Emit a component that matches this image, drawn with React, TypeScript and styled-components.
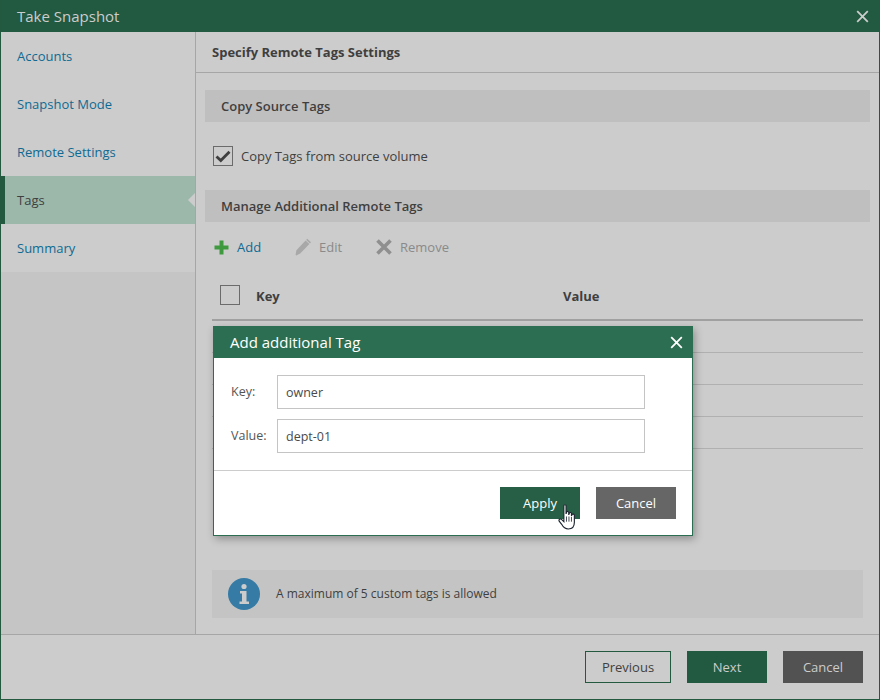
import React from "react";
import styled, { createGlobalStyle } from "styled-components";

const Global = createGlobalStyle`
  html, body { margin: 0; padding: 0; }
  body { font-family: "Open Sans", "Liberation Sans", sans-serif; background: #ccc; }
  * { box-sizing: border-box; }
`;

const Window = styled.div`
  position: relative;
  width: 880px;
  height: 700px;
  display: flex;
  flex-direction: column;
  background: #ccc;
  border: 1px solid #22593f;
  border-top: none;
  overflow: hidden;
`;
const TitleBar = styled.header`
  height: 32px;
  flex: none;
  margin: 0 -1px;
  padding: 0 11px 0 17px;
  display: flex;
  align-items: center;
  justify-content: space-between;
  background: #225a41;
  color: #ccc;
  font-size: 15px;
`;
const Main = styled.div`
  flex: 1;
  display: flex;
  min-height: 0;
`;
const Sidebar = styled.nav`
  width: 195px;
  flex: none;
  background: #c5c5c5;
  border-right: 1px solid #a6a6a6;
`;
const NavItem = styled.div<{ $active?: boolean }>`
  position: relative;
  height: 48px;
  display: flex;
  align-items: center;
  padding-left: ${(p) => (p.$active ? "12px" : "16px")};
  font-size: 13px;
  margin-left: ${(p) => (p.$active ? "-1px" : "0")};
  color: ${(p) => (p.$active ? "#3f3f3f" : "#0f6a92")};
  background: ${(p) => (p.$active ? "#9cb8ab" : "#ccc")};
  border-left: ${(p) => (p.$active ? "5px solid #22593f" : "none")};
  ${(p) =>
    p.$active &&
    `&::after {
      content: "";
      position: absolute;
      right: 0;
      top: 17px;
      border: 7px solid transparent;
      border-right-color: #ccc;
      border-left: none;
    }`}
`;
const Content = styled.section`
  flex: 1;
  display: flex;
  flex-direction: column;
  min-width: 0;
`;
const PaneTitle = styled.div`
  height: 41px;
  flex: none;
  padding-left: 16px;
  display: flex;
  align-items: center;
  font-size: 13px;
  font-weight: 700;
  color: #3f3f3f;
  border-bottom: 1px solid #a6a6a6;
`;
const PaneBody = styled.div`
  flex: 1;
  display: flex;
  flex-direction: column;
  padding: 17px 9px 16px 9px;
`;
const SectionBar = styled.div`
  height: 32px;
  flex: none;
  padding-left: 16px;
  display: flex;
  align-items: center;
  background: #bfbfbf;
  color: #3f3f3f;
  font-size: 13px;
  font-weight: 600;
`;
const CheckRow = styled.label`
  height: 68px;
  flex: none;
  padding-left: 8px;
  display: flex;
  align-items: center;
  gap: 8px;
  font-size: 13px;
  color: #3f3f3f;
`;
const Box = styled.span`
  width: 20px;
  height: 20px;
  flex: none;
  display: flex;
  align-items: center;
  justify-content: center;
  border: 1px solid #6b6b6b;
`;
const Toolbar = styled.div`
  height: 50px;
  flex: none;
  padding-left: 9px;
  display: flex;
  align-items: center;
`;
const Tool = styled.span<{ $disabled?: boolean; $w: number; $gap: number }>`
  width: ${(p) => p.$w}px;
  display: flex;
  align-items: center;
  gap: ${(p) => p.$gap}px;
  font-size: 13px;
  color: ${(p) => (p.$disabled ? "#8a8a8a" : "#0f6a92")};
`;
const Table = styled.div`
  margin: 0 0 0 7px;
  width: 651px;
  flex: none;
`;
const HeadRow = styled.div`
  height: 49px;
  display: grid;
  grid-template-columns: 36px 307px 1fr;
  align-items: center;
  padding: 0 0 1px 8px;
  border-bottom: 2px solid #a0a0a0;
  font-size: 13px;
  font-weight: 700;
  color: #3f3f3f;
`;
const HeadCell = styled.span`
  padding-top: 2px;
`;
const Row = styled.div`
  height: 32px;
  border-bottom: 1px solid #b0b0b0;
`;
const Info = styled.div`
  margin: auto 0 0 7px;
  width: 651px;
  height: 48px;
  flex: none;
  display: flex;
  align-items: center;
  gap: 16px;
  padding-left: 16px;
  background: #c4c4c4;
  font-size: 12px;
  color: #3f3f3f;
`;
const InfoText = styled.span`
  padding-bottom: 2px;
`;
const Footer = styled.footer`
  height: 65px;
  flex: none;
  padding: 16px 16px 0 0;
  display: flex;
  justify-content: flex-end;
  gap: 16px;
  border-top: 1px solid #a6a6a6;
`;
const Button = styled.button<{ $kind: "ghost" | "primary" | "dark" | "dialogPrimary" | "dialogDark" }>`
  width: ${(p) => (p.$kind === "ghost" ? "86px" : "80px")};
  height: 32px;
  padding: 0;
  border: ${(p) => (p.$kind === "ghost" ? "1px solid #22593f" : "none")};
  border-radius: 0;
  font-family: inherit;
  font-size: 13px;
  background: ${(p) =>
    ({ ghost: "transparent", primary: "#225a41", dark: "#525252", dialogPrimary: "#265f46", dialogDark: "#666" })[p.$kind]};
  color: ${(p) =>
    ({ ghost: "#3f3f3f", primary: "#ccc", dark: "#ccc", dialogPrimary: "#fff", dialogDark: "#fff" })[p.$kind]};
`;
const Dialog = styled.div`
  position: absolute;
  left: 212px;
  top: 326px;
  width: 480px;
  height: 210px;
  display: flex;
  flex-direction: column;
  background: #fff;
  border: 1px solid #2c6e51;
  border-top: none;
  box-shadow: 2px 3px 8px rgba(0, 0, 0, 0.3);
`;
const DialogHead = styled.div`
  height: 32px;
  flex: none;
  margin: 0 -1px;
  padding: 0 10px 0 17px;
  display: flex;
  align-items: center;
  justify-content: space-between;
  background: #2c6e51;
  color: #fff;
  font-size: 15px;
`;
const Form = styled.div`
  height: 113px;
  flex: none;
  padding-top: 17px;
  display: flex;
  flex-direction: column;
  gap: 10px;
  border-bottom: 1px solid #ccc;
`;
const Field = styled.div`
  display: flex;
  align-items: center;
`;
const Label = styled.span`
  width: 63px;
  padding-left: 17px;
  padding-bottom: 2px;
  flex: none;
  font-size: 12.5px;
  color: #555;
`;
const Input = styled.div`
  width: 368px;
  height: 34px;
  padding-left: 8px;
  display: flex;
  align-items: center;
  border: 1px solid #c4c4c4;
  font-size: 12.5px;
  color: #4a4a4a;
`;
const DialogActions = styled.div`
  position: relative;
  flex: 1;
  padding: 16px 16px 0 0;
  display: flex;
  justify-content: flex-end;
  gap: 16px;
`;
const Cursor = styled.svg`
  position: absolute;
  left: 344px;
  top: 33px;
`;

const Close = ({ color }: { color: string }) => (
  <svg width="13" height="13" viewBox="0 0 13 13">
    <path d="M1.2 1.2L11.8 11.8M11.8 1.2L1.2 11.8" stroke={color} strokeWidth="1.8" fill="none" />
  </svg>
);

const Check = () => (
  <svg width="16" height="13" viewBox="0 0 16 13">
    <path d="M1.5 6.5L5.8 10.5L14.5 1.8" stroke="#3f3f3f" strokeWidth="2.8" fill="none" />
  </svg>
);

export default function App() {
  return (
    <>
      <Global />
      <Window>
        <TitleBar>
          Take Snapshot
          <Close color="#ccc" />
        </TitleBar>
        <Main>
          <Sidebar>
            <NavItem>Accounts</NavItem>
            <NavItem>Snapshot Mode</NavItem>
            <NavItem>Remote Settings</NavItem>
            <NavItem $active>Tags</NavItem>
            <NavItem>Summary</NavItem>
          </Sidebar>
          <Content>
            <PaneTitle>Specify Remote Tags Settings</PaneTitle>
            <PaneBody>
              <SectionBar>Copy Source Tags</SectionBar>
              <CheckRow>
                <Box>
                  <Check />
                </Box>
                Copy Tags from source volume
              </CheckRow>
              <SectionBar>Manage Additional Remote Tags</SectionBar>
              <Toolbar>
                <Tool $w={81} $gap={8}>
                  <svg width="15" height="15" viewBox="0 0 15 15">
                    <path d="M5.5 0.5h4v5h5v4h-5v5h-4v-5h-5v-4h5z" fill="#3f9a3f" />
                  </svg>
                  Add
                </Tool>
                <Tool $w={81} $gap={7}>
                  <svg width="17" height="18" viewBox="0 0 17 18">
                    <path d="M12.2 0.8L16 4.3L15 5.4L11.2 1.9ZM10.6 2.6L14.4 6.1L5.2 15.6L1.2 17.4L0.6 16.8L1.4 12.2Z" fill="#a8a8a8" />
                  </svg>
                  <ToolDisabledText>Edit</ToolDisabledText>
                </Tool>
                <Tool $w={90} $gap={8} $disabled>
                  <svg width="16" height="16" viewBox="0 0 16 16">
                    <path d="M1.5 1.5L14.5 14.5M14.5 1.5L1.5 14.5" stroke="#8f8f8f" strokeWidth="3.6" fill="none" />
                  </svg>
                  Remove
                </Tool>
              </Toolbar>
              <Table>
                <HeadRow>
                  <Box />
                  <HeadCell>Key</HeadCell>
                  <HeadCell>Value</HeadCell>
                </HeadRow>
                <Row />
                <Row />
                <Row />
                <Row />
              </Table>
              <Info>
                <svg width="32" height="32" viewBox="0 0 32 32">
                  <circle cx="16" cy="16" r="16" fill="#357ba5" />
                  <circle cx="16" cy="8.5" r="2.6" fill="#ccc" />
                  <path d="M12 13h6.5v10.5H21V26H11.5v-2.5H14V15.5H12z" fill="#ccc" />
                </svg>
                <InfoText>A maximum of 5 custom tags is allowed</InfoText>
              </Info>
            </PaneBody>
          </Content>
        </Main>
        <Footer>
          <Button $kind="ghost">Previous</Button>
          <Button $kind="primary">Next</Button>
          <Button $kind="dark">Cancel</Button>
        </Footer>
        <Dialog>
          <DialogHead>
            Add additional Tag
            <Close color="#fff" />
          </DialogHead>
          <Form>
            <Field>
              <Label>Key:</Label>
              <Input>owner</Input>
            </Field>
            <Field>
              <Label>Value:</Label>
              <Input>dept-01</Input>
            </Field>
          </Form>
          <DialogActions>
            <Button $kind="dialogPrimary">Apply</Button>
            <Button $kind="dialogDark">Cancel</Button>
            <Cursor width="19" height="26" viewBox="0 0 18 25">
              <path
                d="M5.5 1.8C5.5 0.4 7.6 0.4 7.6 1.8V9.5L8.2 7.8C8.6 6.8 10.2 7 10.2 8.2V10.5L10.8 8.8C11.2 7.8 12.8 8 12.8 9.2V11.5L13.4 10.2C13.8 9.4 15.6 9.6 15.6 10.8V17.5C15.6 21.5 13.6 24 9.8 24C6.6 24 5 22.5 3.4 19.5L1 16.5C0.2 15 2 13.8 3.2 14.8L5.5 17Z"
                fill="#fff"
                stroke="#1d2430"
                strokeWidth="1.1"
              />
              <path d="M8 12V17M10.4 12V17M12.8 12.5V17" stroke="#1d2430" strokeWidth="0.8" />
            </Cursor>
          </DialogActions>
        </Dialog>
      </Window>
    </>
  );
}

const ToolDisabledText = styled.span`
  color: #8a8a8a;
`;
